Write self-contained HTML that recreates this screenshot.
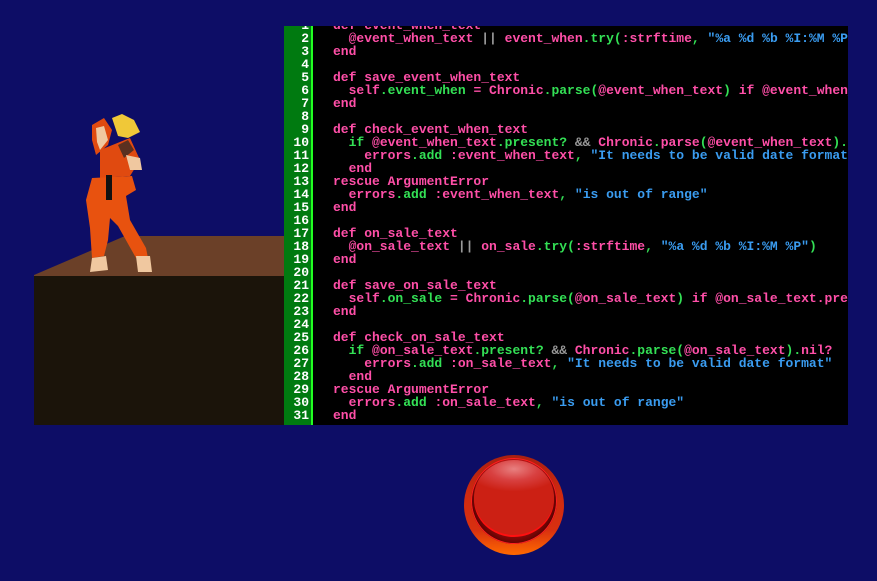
<!DOCTYPE html>
<html><head><meta charset="utf-8"><style>
html,body{margin:0;padding:0;width:877px;height:581px;overflow:hidden;background:#0d0d66;}
.stage{position:absolute;left:0;top:0;}
.panel{position:absolute;left:284px;top:26px;width:564px;height:399px;background:#000;overflow:hidden;}
.gut{position:absolute;left:0;top:0;width:27px;height:399px;background:#007a10;border-right:2px solid #22ff22;}
pre{margin:0;position:absolute;top:-7px;font:bold 13px/13px "Liberation Mono",monospace;}
.nums{left:0;width:25px;text-align:right;color:#fff;}
.code{left:49px;color:#ff4fa8;white-space:pre;}
.g{color:#33e055}.s{color:#3a9cf0}.o{color:#999}
.btn{position:absolute;left:464px;top:455px;width:100px;height:100px;border-radius:50%;
background:linear-gradient(180deg,#a82010 0%,#d02a10 40%,#d83010 75%,#ff6a00 100%);}
.btn .rim{position:absolute;left:7px;top:3px;width:86px;height:86px;border-radius:50%;background:radial-gradient(ellipse at 50% 40%,#b01010 50%,#500000 75%);box-shadow:0 0 0 1px #ff2020 inset;}
.btn .cap{position:absolute;left:10px;top:5px;width:80px;height:75px;border-radius:50%;
background:radial-gradient(ellipse 60% 30% at 50% 12%,#e88080 0,#d84040 50%,rgba(204,32,16,0) 100%),#cc2014;box-shadow:0 2px 0 #ff1010;}
</style></head><body>
<svg class="stage" width="877" height="581">
<polygon points="34,275 125,236 284,236 284,276 34,276" fill="#6b4028"/>
<rect x="34" y="276" width="250" height="149" fill="#1b140a"/>
<g>
<path d="M92,125 L104,118 L112,130 L108,145 L96,155 L92,140Z" fill="#e04a10"/>
<path d="M96,128 L104,126 L108,140 L100,150 L97,142Z" fill="#f0c8a0"/>
<path d="M112,118 L122,114 L134,120 L140,132 L128,138 L118,136Z" fill="#f0c838"/>
<path d="M100,150 L130,138 L140,160 L130,176 L100,178Z" fill="#e04a10"/>
<path d="M118,145 L128,140 L134,150 L124,158Z" fill="#5a3020"/>
<path d="M126,155 L140,158 L142,170 L130,170Z" fill="#f0c8a0"/>
<path d="M92,178 L132,176 L136,190 L126,196 L130,220 L146,248 L148,258 L136,258 L118,226 L110,218 L108,240 L104,256 L92,258 L90,228 L86,200Z" fill="#e8520f"/>
<rect x="106" y="175" width="6" height="25" fill="#111"/>
<path d="M92,258 L106,256 L108,270 L90,272Z" fill="#f0c8a0"/>
<path d="M136,256 L150,256 L152,272 L138,272Z" fill="#f0c8a0"/>
</g>
</svg>
<div class="panel">
<div class="gut"></div>
<pre class="nums">1
2
3
4
5
6
7
8
9
10
11
12
13
14
15
16
17
18
19
20
21
22
23
24
25
26
27
28
29
30
31</pre>
<pre class="code">def event_when_text
  @event_when_text <span class="o">||</span> event_when<span class="g">.try(</span>:strftime<span class="g">,</span> <span class="s">"%a %d %b %I:%M %P")</span>
end

def save_event_when_text
  self<span class="g">.event_when</span> = Chronic<span class="g">.parse(</span>@event_when_text<span class="g">)</span> if @event_when_text.present?
end

def check_event_when_text
  <span class="g">if</span> @event_when_text<span class="g">.present?</span> <span class="o">&amp;&amp;</span> Chronic<span class="g">.</span>parse<span class="g">(</span>@event_when_text<span class="g">).</span>nil?
    errors<span class="g">.add</span> :event_when_text<span class="g">,</span> <span class="s">"It needs to be valid date format"</span>
  end
rescue ArgumentError
  errors<span class="g">.add</span> :event_when_text<span class="g">,</span> <span class="s">"is out of range"</span>
end

def on_sale_text
  @on_sale_text <span class="o">||</span> on_sale<span class="g">.try(</span>:strftime<span class="g">,</span> <span class="s">"%a %d %b %I:%M %P"</span><span class="g">)</span>
end

def save_on_sale_text
  self<span class="g">.on_sale</span> = Chronic<span class="g">.parse(</span>@on_sale_text<span class="g">)</span> if @on_sale_text.present?
end

def check_on_sale_text
  <span class="g">if</span> @on_sale_text<span class="g">.present?</span> <span class="o">&amp;&amp;</span> Chronic<span class="g">.parse(</span>@on_sale_text<span class="g">).</span>nil?
    errors<span class="g">.add</span> :on_sale_text<span class="g">,</span> <span class="s">"It needs to be valid date format"</span>
  end
rescue ArgumentError
  errors<span class="g">.add</span> :on_sale_text<span class="g">,</span> <span class="s">"is out of range"</span>
end</pre>
</div>
<div class="btn"><div class="rim"></div><div class="cap"></div></div>
</body></html>
